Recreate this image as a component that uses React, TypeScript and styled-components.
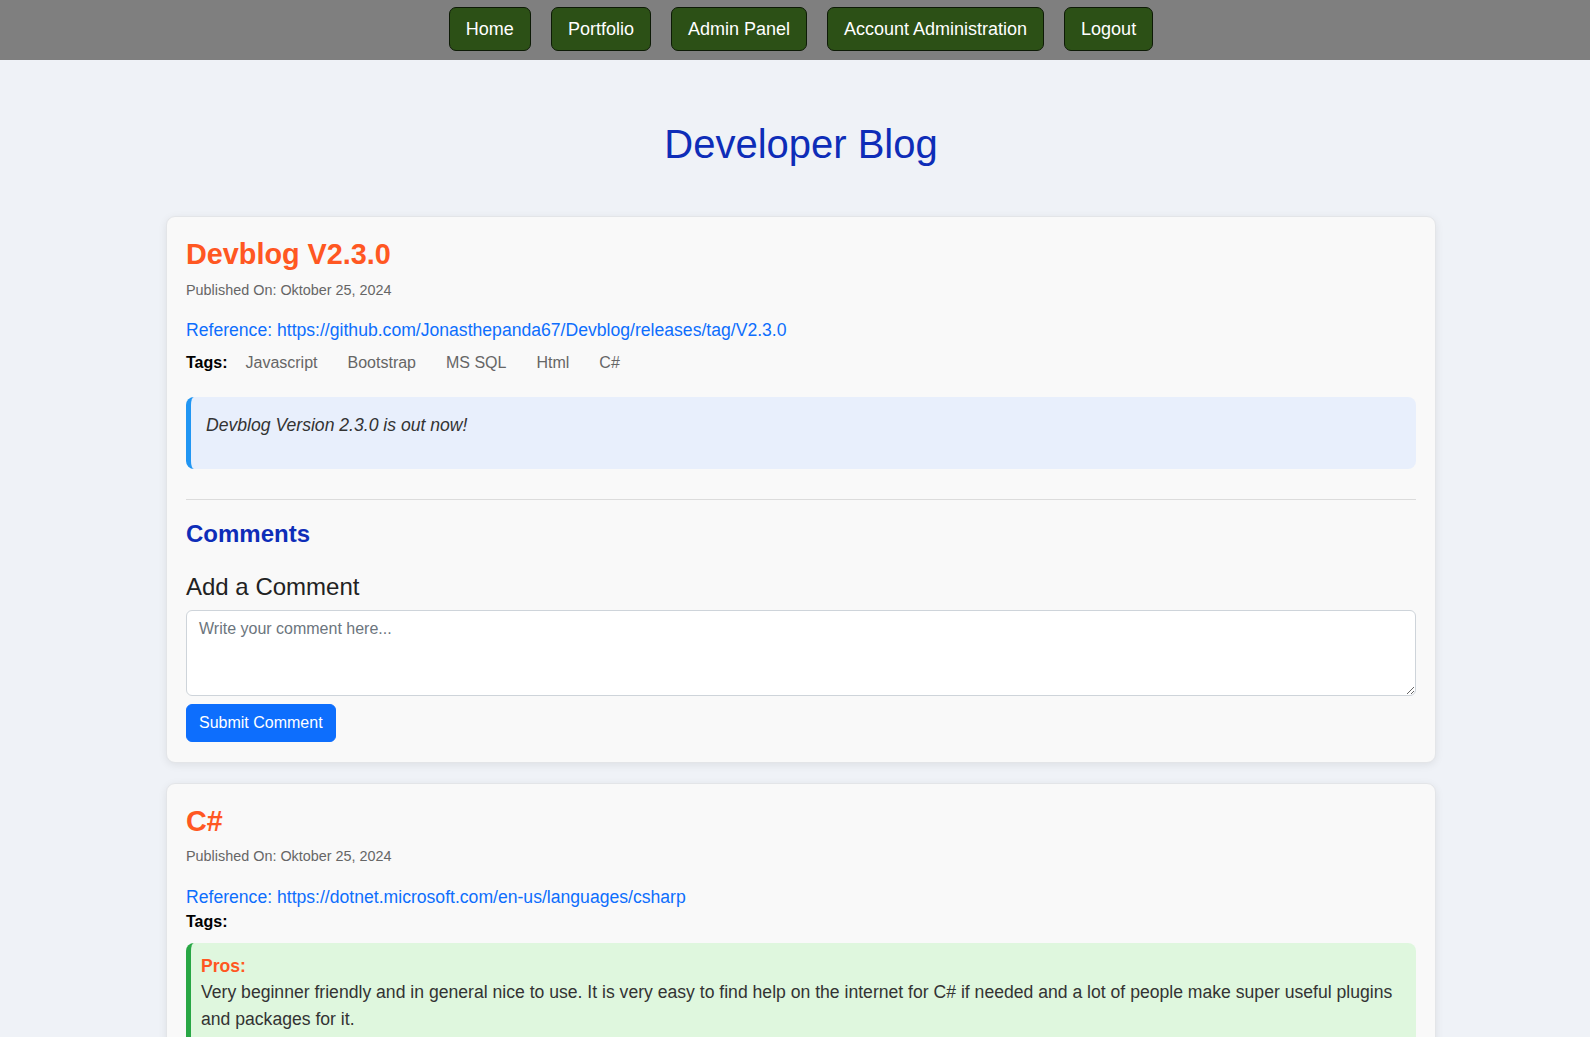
import React from "react";
import styled, { createGlobalStyle } from "styled-components";

const GlobalStyle = createGlobalStyle`
  * { box-sizing: border-box; }
  html, body {
    margin: 0;
    padding: 0;
    background: #eff2f7;
    font-family: "Liberation Sans", Arial, sans-serif;
    font-size: 16px;
    line-height: 1.5;
    color: #222;
  }
`;

const NavBar = styled.nav`
  background: #7f7f7f;
  height: 60px;
  padding: 7px 0 0 12px;
  display: flex;
  justify-content: center;
  align-items: flex-start;
  gap: 20px;
`;

const NavButton = styled.a`
  display: inline-block;
  background: #2c5016;
  color: #fff;
  border: 1px solid #0d1a06;
  border-radius: 7px;
  padding: 10px 16px;
  font-size: 18px;
  line-height: 22px;
  text-decoration: none;
  cursor: pointer;
`;

const Main = styled.main`
  padding: 0 0 40px 12px;
`;

const PageTitle = styled.h1`
  margin: 60px 0 48px;
  text-align: center;
  font-size: 40px;
  line-height: 48px;
  font-weight: 400;
  color: #0e2db8;
`;

const Card = styled.article`
  width: 1270px;
  margin: 0 auto 20px;
  background: #f9f9f9;
  border: 1px solid #e3e5e8;
  border-radius: 9px;
  box-shadow: 0 2px 8px rgba(0, 0, 0, 0.08);
  padding: 20px 19px;
`;

const PostTitle = styled.h2`
  margin: 0 0 8px;
  font-size: 28.8px;
  line-height: 1.2;
  font-weight: 700;
  color: #ff5722;
`;

const Published = styled.p`
  margin: 0 0 16px;
  font-size: 14.4px;
  line-height: 1.5;
  color: #666;
`;

const Reference = styled.a`
  display: block;
  font-size: 17.6px;
  line-height: 1.5;
  color: #0d6efd;
  text-decoration: none;
`;

const TagsRow = styled.div`
  font-size: 16px;
  line-height: 24px;
`;

const TagsLabel = styled.strong`
  font-weight: 700;
  color: #000;
  margin-right: 3px;
`;

const Tag = styled.span`
  display: inline-block;
  padding: 7px 15px;
  margin-bottom: 6px;
  color: #666;
`;

const Callout = styled.div<{ $variant: "info" | "pros" }>`
  margin-top: 9px;
  border-radius: 8px;
  border-left: 5px solid ${(p) => (p.$variant === "info" ? "#2196f3" : "#28a745")};
  background: ${(p) => (p.$variant === "info" ? "#e8effc" : "#dff7de")};
  padding: ${(p) => (p.$variant === "info" ? "15px" : "10px")};
  font-size: 17.6px;
  line-height: 1.5;
  color: #333;
`;

const CalloutText = styled.p<{ $italic?: boolean }>`
  margin: 0 0 16px;
  font-style: ${(p) => (p.$italic ? "italic" : "normal")};
`;

const CalloutLabel = styled.strong`
  display: block;
  color: #ff5722;
  font-weight: 700;
`;

const Divider = styled.hr`
  border: 0;
  border-top: 1px solid #dcdcdc;
  margin: 30px 0 20px;
`;

const CommentsHeading = styled.h3`
  margin: 0 0 24px;
  font-size: 24px;
  line-height: 1.2;
  font-weight: 700;
  color: #0e2db8;
`;

const FormHeading = styled.h4`
  margin: 0 0 8px;
  font-size: 24px;
  line-height: 1.2;
  font-weight: 400;
  color: #222;
`;

const CommentInput = styled.textarea`
  display: block;
  width: 100%;
  height: 86px;
  padding: 6px 12px;
  font-family: "Liberation Sans", Arial, sans-serif;
  font-size: 16px;
  line-height: 24px;
  color: #212529;
  background: #fff;
  border: 1px solid #ced4da;
  border-radius: 6px;
  resize: vertical;
  outline: none;
  &::placeholder {
    color: #6c757d;
  }
`;

const SubmitButton = styled.button`
  margin-top: 8px;
  padding: 6px 12px;
  font-family: "Liberation Sans", Arial, sans-serif;
  font-size: 16px;
  line-height: 24px;
  color: #fff;
  background: #0d6efd;
  border: 1px solid #0d6efd;
  border-radius: 6px;
  cursor: pointer;
`;

type Post = {
  title: string;
  date: string;
  reference: string;
  tags: string[];
};

const navItems = ["Home", "Portfolio", "Admin Panel", "Account Administration", "Logout"];

const PostHeader: React.FC<{ post: Post }> = ({ post }) => (
  <>
    <PostTitle>{post.title}</PostTitle>
    <Published>Published On: {post.date}</Published>
    <Reference href="#">Reference: {post.reference}</Reference>
    <TagsRow>
      <TagsLabel>Tags:</TagsLabel>
      {post.tags.map((t) => (
        <Tag key={t}>{t}</Tag>
      ))}
    </TagsRow>
  </>
);

export default function App() {
  const first: Post = {
    title: "Devblog V2.3.0",
    date: "Oktober 25, 2024",
    reference: "https://github.com/Jonasthepanda67/Devblog/releases/tag/V2.3.0",
    tags: ["Javascript", "Bootstrap", "MS SQL", "Html", "C#"],
  };
  const second: Post = {
    title: "C#",
    date: "Oktober 25, 2024",
    reference: "https://dotnet.microsoft.com/en-us/languages/csharp",
    tags: [],
  };
  return (
    <>
      <GlobalStyle />
      <NavBar>
        {navItems.map((n) => (
          <NavButton key={n}>{n}</NavButton>
        ))}
      </NavBar>
      <Main>
        <PageTitle>Developer Blog</PageTitle>
        <Card>
          <PostHeader post={first} />
          <Callout $variant="info">
            <CalloutText $italic>Devblog Version 2.3.0 is out now!</CalloutText>
          </Callout>
          <Divider />
          <CommentsHeading>Comments</CommentsHeading>
          <FormHeading>Add a Comment</FormHeading>
          <CommentInput placeholder="Write your comment here..." rows={3} />
          <SubmitButton>Submit Comment</SubmitButton>
        </Card>
        <Card>
          <PostHeader post={second} />
          <Callout $variant="pros">
            <CalloutLabel>Pros:</CalloutLabel>
            <CalloutText>
              Very beginner friendly and in general nice to use. It is very easy to find help on the
              internet for C# if needed and a lot of people make super useful plugins and packages
              for it.
            </CalloutText>
          </Callout>
        </Card>
      </Main>
    </>
  );
}
